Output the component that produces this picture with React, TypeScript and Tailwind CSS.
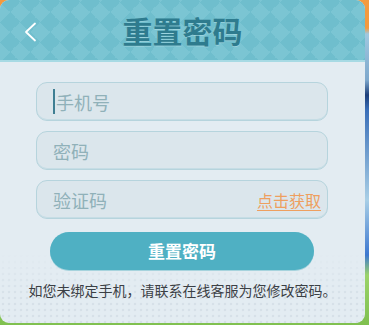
import React from "react";

const font = { fontFamily: '"Noto Sans CJK SC", "Noto Sans", sans-serif' };

function Field({ label, cursor, action }: { label: string; cursor?: boolean; action?: string }) {
  return (
    <div className="flex h-[39px] items-center rounded-[11px] border border-[#b6d4dd] bg-[#dbe6ec] pl-[16px] pr-[6px] shadow-[inset_0_-1px_0_#c6dde5]">
      {cursor && <span className="mr-[1px] h-[25px] w-[2px] bg-[#3f7f93]" />}
      <span className="flex-1 text-[18px] leading-none text-[#90b1b9]">{label}</span>
      {action && (
        <span className="text-[16px] leading-none text-[#ee9f5f] underline decoration-1 underline-offset-[3px]">
          {action}
        </span>
      )}
    </div>
  );
}

export default function App() {
  return (
    <div
      className="flex h-[325px] w-[369px] items-start overflow-hidden bg-[linear-gradient(to_bottom,#f39a3e_0px,#f39a3e_28px,#9fc8e0_34px,#7ea8cc_80px,#1d3f7a_95px,#3a6fb8_110px,#a9cfe6_200px,#3d78d0_255px,#9bd36a_275px,#7fc04f_325px)]"
      style={font}
    >
      <div className="relative flex h-[323px] w-[365px] flex-col overflow-hidden rounded-[9px] bg-[#e3ecf2]">
        <div className="relative flex h-[62px] shrink-0 items-center justify-center border-b-[2px] border-[#a7dae4] bg-[conic-gradient(from_45deg,#7bc5d3_25%,#6fbecd_0_50%,#7bc5d3_0_75%,#6fbecd_0)] bg-[length:20px_20px] bg-[position:0px_2px]">
          <svg
            className="absolute left-[24px] top-[22px]"
            width="13"
            height="20"
            viewBox="0 0 13 20"
            fill="none"
          >
            <path d="M11 1.5 L2 10 L11 18.5" stroke="#ffffff" strokeWidth="1.8" strokeLinecap="round" strokeLinejoin="round" />
          </svg>
          <span className="text-[30px] font-bold leading-none tracking-[0px] text-[#2e7b8e] [text-shadow:0_1px_0_rgba(255,255,255,0.25)]">
            重置密码
          </span>
        </div>

        <div className="relative flex flex-1 flex-col">
          <div className="absolute inset-x-0 bottom-0 h-[70px] bg-[radial-gradient(circle,#d6e0e8_1.1px,transparent_1.6px)] bg-[length:6px_6px] [mask-image:linear-gradient(to_bottom,transparent,black_60%)]" />
          <div className="relative flex flex-col gap-[10px] pl-[36px] pr-[37px] pt-[20px]">
            <Field label="手机号" cursor />
            <Field label="密码" />
            <Field label="验证码" action="点击获取" />
          </div>
          <div className="relative mt-[13px] flex justify-center pr-[1px]">
            <div className="flex h-[38px] w-[264px] items-center justify-center rounded-full bg-[#4fb0c3] text-[17px] font-bold text-white shadow-[0_1px_0_#a6d3dd]">
              重置密码
            </div>
          </div>
          <div className="relative mt-[11px] text-center text-[14px] leading-[18px] text-[#3b4045]">
            如您未绑定手机，请联系在线客服为您修改密码。
          </div>
        </div>
      </div>
    </div>
  );
}
